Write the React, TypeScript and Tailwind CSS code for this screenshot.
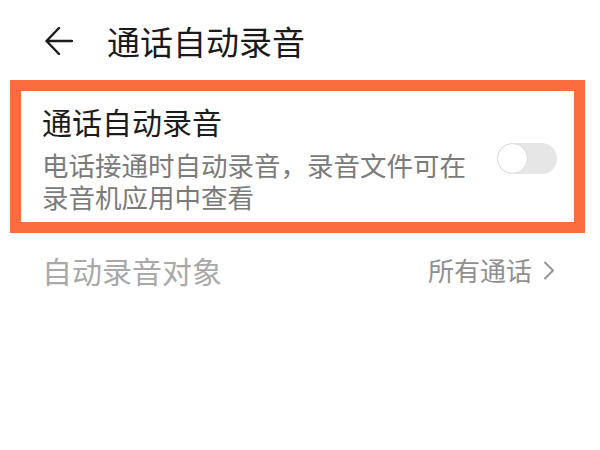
const font = {
  fontFamily: '"Noto Sans CJK SC", "Noto Sans", sans-serif',
};

const BackArrow = () => (
  <svg width="28" height="28" viewBox="0 0 28 28" fill="none">
    <path
      d="M27 14H1.5M14 1L1.5 14L14 27"
      stroke="#1a1a1a"
      strokeWidth="2.4"
      strokeLinecap="round"
      strokeLinejoin="round"
    />
  </svg>
);

const Toggle = () => (
  <div className="relative w-[60px] h-[31px] rounded-full bg-[#e6e6e6]">
    <div className="absolute left-0 top-0 w-[31px] h-[31px] rounded-full bg-white border border-[#dcdcdc]" />
  </div>
);

const Chevron = () => (
  <svg width="12" height="19" viewBox="0 0 12 19" fill="none">
    <path
      d="M2 1.5L10 9.5L2 17.5"
      stroke="#959595"
      strokeWidth="2"
      strokeLinecap="round"
      strokeLinejoin="round"
    />
  </svg>
);

export default function App() {
  return (
    <div className="w-[600px] h-[450px] bg-white overflow-hidden" style={font}>
      <div className="h-[80px] pt-[2px] pl-[45px] flex items-center">
        <BackArrow />
        <p className="ml-[34px] text-[33px] leading-[40px] text-[#1a1a1a]">
          通话自动录音
        </p>
      </div>

      <div className="ml-[10px] mr-[15px] border-[11px] border-[#fb6d3f] flex items-center justify-between pl-[21px] pr-[17px] pt-[12px] pb-[9px]">
        <div className="flex flex-col">
          <p className="text-[30px] leading-[36px] text-[#1c1c1c]">通话自动录音</p>
          <p className="mt-[10px] w-[436px] text-[26.5px] leading-[32px] text-[#7b7b7b]">
            电话接通时自动录音，录音文件可在录音机应用中查看
          </p>
        </div>
        <Toggle />
      </div>

      <div className="h-[74px] pl-[42px] pr-[45px] flex items-center justify-between">
        <p className="text-[30px] leading-[36px] text-[#a9a9a9]">自动录音对象</p>
        <div className="flex items-center gap-[11px]">
          <p className="text-[26px] leading-[32px] text-[#909090]">所有通话</p>
          <Chevron />
        </div>
      </div>
    </div>
  );
}
